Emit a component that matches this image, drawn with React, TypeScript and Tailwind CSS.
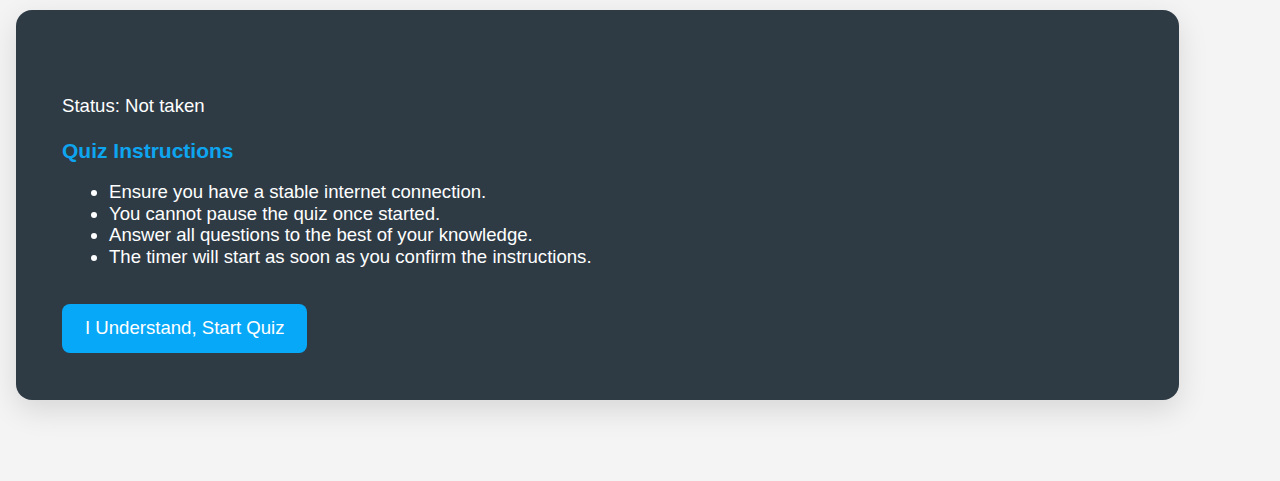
export default function App() {
  const rules = [
    'Ensure you have a stable internet connection.',
    'You cannot pause the quiz once started.',
    'Answer all questions to the best of your knowledge.',
    'The timer will start as soon as you confirm the instructions.',
  ];

  return (
    <div className="min-h-[481px] bg-[#f4f4f4] pt-[10px] pl-4 pr-[101px] font-['Liberation_Sans',Arial,sans-serif]">
      <div className="rounded-2xl bg-[#2e3b45] pl-[46px] pr-[46px] pt-[85px] pb-[47px] text-white shadow-[0_10px_30px_rgba(0,0,0,0.12)]">
        <p className="text-[18.6px] leading-[22px]">Status: Not taken</p>
        <h2 className="mt-[22px] text-[21px] font-bold leading-[24px] text-[#0ea5f0]">
          Quiz Instructions
        </h2>
        <ul className="mt-[18px] list-disc pl-[47px] text-[18.6px] leading-[21.7px]">
          {rules.map((r) => (
            <li key={r}>{r}</li>
          ))}
        </ul>
        <button className="mt-[36px] h-[49px] rounded-lg bg-[#08a8f8] px-[23px] text-[18.6px] text-white">
          I Understand, Start Quiz
        </button>
      </div>
    </div>
  );
}
